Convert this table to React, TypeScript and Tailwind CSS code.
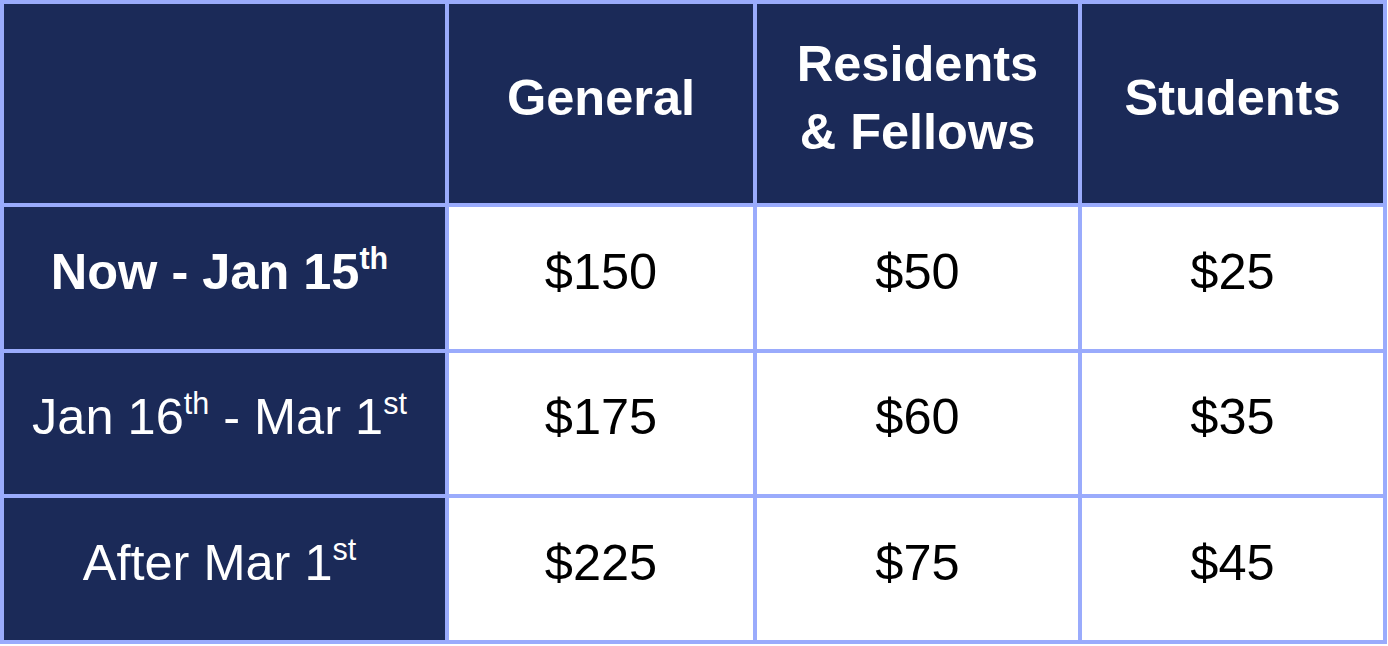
import React from "react";

const navy = "bg-[#1b2a58]";

function Sup({ children }: { children: React.ReactNode }) {
  return <span className="relative top-[-20px] text-[30.5px] leading-none">{children}</span>;
}

export default function App() {
  const rows: { label: React.ReactNode; bold?: boolean; vals: string[] }[] = [
    {
      label: (
        <>
          Now - Jan 15<Sup>th</Sup>
        </>
      ),
      bold: true,
      vals: ["$150", "$50", "$25"],
    },
    {
      label: (
        <>
          Jan 16<Sup>th</Sup> - Mar 1<Sup>st</Sup>
        </>
      ),
      vals: ["$175", "$60", "$35"],
    },
    {
      label: (
        <>
          After Mar 1<Sup>st</Sup>
        </>
      ),
      vals: ["$225", "$75", "$45"],
    },
  ];

  return (
    <div className="w-[1388px] h-[646px] bg-white" style={{ fontFamily: '"Liberation Sans", Arial, sans-serif' }}>
      <div className="grid w-[1387px] h-[644px] grid-cols-[441px_304px_321px_301px] grid-rows-[199px_142px_141px_142px] gap-[4px] p-[4px] bg-[#9aabfc]">
        <div className={navy}></div>
        <div className={`${navy} flex items-center justify-center pb-[12px] text-white font-bold text-[50.5px] leading-[68px] text-center`}>General</div>
        <div className={`${navy} flex items-center justify-center pb-[12px] text-white font-bold text-[50.5px] leading-[68px] text-center`}>
          Residents
          <br />& Fellows
        </div>
        <div className={`${navy} flex items-center justify-center pb-[12px] text-white font-bold text-[50.5px] leading-[68px] text-center`}>Students</div>
        {rows.map((r, i) => (
          <React.Fragment key={i}>
            <div
              className={`${navy} flex items-center justify-center pb-[12px] pr-[10px] text-white text-[50.5px] leading-none whitespace-nowrap ${r.bold ? "font-bold" : "font-normal"}`}
            >
              <span>{r.label}</span>
            </div>
            {r.vals.map((v, j) => (
              <div key={j} className="bg-white flex items-center justify-center pb-[12px] text-black text-[50.5px] leading-none">
                {v}
              </div>
            ))}
          </React.Fragment>
        ))}
      </div>
    </div>
  );
}
